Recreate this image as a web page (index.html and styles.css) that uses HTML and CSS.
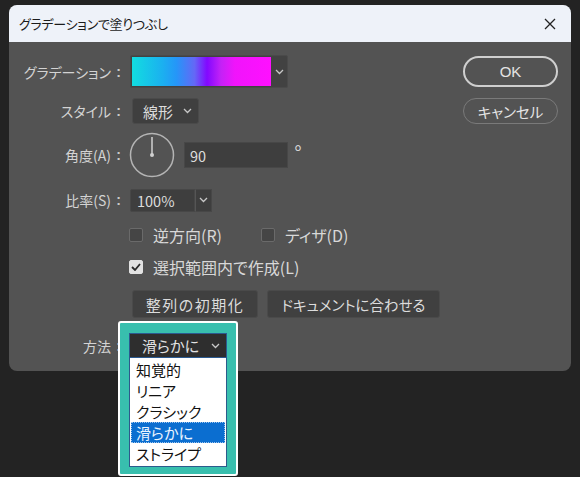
FILE: index.html
```html
<!DOCTYPE html>
<html lang="ja">
<head>
<meta charset="utf-8">
<link rel="stylesheet" href="styles.css">
</head>
<body>
<div class="dialog">
  <div class="titlebar">
    <span class="title">グラデーションで塗りつぶし</span>
    <svg class="close" width="12" height="12" viewBox="0 0 12 12"><path d="M1 1L11 11M11 1L1 11" stroke="#222" stroke-width="1.3" fill="none"/></svg>
  </div>
  <div class="body">
    <div class="form">
      <div class="row r1">
        <span class="label">グラデーション<span class="colon">:</span></span>
        <div class="gradbox">
          <div class="swatch"></div>
          <div class="gbtn"><svg width="9" height="6" viewBox="0 0 9 6"><path d="M1 1L4.5 4.5L8 1" stroke="#c8c8c8" stroke-width="1.3" fill="none"/></svg></div>
        </div>
      </div>
      <div class="row r2">
        <span class="label">スタイル<span class="colon">:</span></span>
        <div class="select style-sel"><span>線形</span><svg width="9" height="6" viewBox="0 0 9 6"><path d="M1 1L4.5 4.5L8 1" stroke="#c8c8c8" stroke-width="1.3" fill="none"/></svg></div>
      </div>
      <div class="row r3">
        <span class="label">角度(A)<span class="colon">:</span></span>
        <svg class="dial" width="46" height="46" viewBox="0 0 46 46"><circle cx="23" cy="23" r="21.5" stroke="#b4b4b4" stroke-width="1.5" fill="none"/><path d="M23 23V5" stroke="#d0d0d0" stroke-width="1.5"/><circle cx="23" cy="23" r="2" fill="#d0d0d0"/></svg>
        <div class="input angle">90</div>
        <span class="deg">°</span>
      </div>
      <div class="row r4">
        <span class="label">比率(S)<span class="colon">:</span></span>
        <div class="combo"><div class="input ratio">100%</div><div class="cbtn"><svg width="9" height="6" viewBox="0 0 9 6"><path d="M1 1L4.5 4.5L8 1" stroke="#c8c8c8" stroke-width="1.3" fill="none"/></svg></div></div>
      </div>
      <div class="row r5">
        <span class="label"></span>
        <span class="check"></span><span class="ctext">逆方向(R)</span>
        <span class="check second"></span><span class="ctext">ディザ(D)</span>
      </div>
      <div class="row r6">
        <span class="label"></span>
        <span class="check on"><svg width="10" height="8" viewBox="0 0 10 8"><path d="M1 4L4 7L9 1" stroke="#2a2a2a" stroke-width="1.8" fill="none"/></svg></span><span class="ctext">選択範囲内で作成(L)</span>
      </div>
      <div class="row r7">
        <span class="label"></span>
        <div class="btn reset">整列の初期化</div>
        <div class="btn fit">ドキュメントに合わせる</div>
      </div>
      <div class="row r8">
        <span class="label method">方法<span class="colon">:</span></span>
        <div class="popwrap">
          <div class="highlight">
            <div class="msel"><span>滑らかに</span><svg width="9" height="6" viewBox="0 0 9 6"><path d="M1 1L4.5 4.5L8 1" stroke="#c8c8c8" stroke-width="1.3" fill="none"/></svg></div>
            <ul class="list">
              <li>知覚的</li>
              <li>リニア</li>
              <li>クラシック</li>
              <li class="sel">滑らかに</li>
              <li>ストライプ</li>
            </ul>
          </div>
        </div>
      </div>
    </div>
    <div class="actions">
      <div class="pill ok">OK</div>
      <div class="pill cancel">キャンセル</div>
    </div>
  </div>
</div>
</body>
</html>
```
FILE: styles.css
```css
html, body {
  margin: 0;
  padding: 0;
}
body {
  background: #232323;
  width: 580px;
  height: 477px;
  overflow: hidden;
  font-family: "Noto Sans CJK JP", "Noto Sans", sans-serif;
  font-feature-settings: "palt";
}
.dialog {
  margin: 5px 0 0 9px;
  width: 562px;
  height: 366px;
  background: #535353;
  border-radius: 8px;
}
.titlebar {
  height: 37px;
  background: #eef2f9;
  border-radius: 8px 8px 0 0;
  display: flex;
  align-items: center;
  justify-content: space-between;
  padding: 0 15px 0 10px;
}
.title {
  font-size: 13px;
  color: #1b1b1b;
  letter-spacing: -0.3px;
}
.body {
  display: flex;
  padding: 13px 13px 0 0;
}
.form {
  flex: 1;
  display: flex;
  flex-direction: column;
}
.row {
  display: flex;
  align-items: center;
}
.label {
  width: 117px;
  margin-right: 4px;
  display: flex;
  justify-content: flex-end;
  align-items: center;
  font-size: 14px;
  color: #d3d3d3;
  white-space: nowrap;
  flex: none;
}
.colon {
  width: 15px;
  text-align: center;
  font-family: "Liberation Sans", sans-serif;
  font-size: 14px;
  font-weight: bold;
  color: #c9c9c9;
}
.r1 { height: 33px; }
.r2 { height: 26px; margin-top: 10px; }
.r3 { height: 46px; margin-top: 8px; }
.r4 { height: 22px; margin-top: 11px; }
.r5 { height: 18px; margin-top: 15px; }
.r6 { height: 18px; margin-top: 14px; }
.r7 { height: 28px; margin-top: 14px; }
.r8 { height: 25px; margin-top: 15px; }

.gradbox {
  display: flex;
  height: 33px;
  width: 158px;
  box-sizing: border-box;
  background: #424242;
  border: 1px solid #4a4a4a;
  border-radius: 2px;
}
.swatch {
  width: 139px;
  margin: 1px 0 1px 1px;
  background: linear-gradient(90deg, #12dde0 0%, #1bb0f0 22%, #2596f8 32%, #6468f6 45%, #8208ff 54%, #c422f6 64%, #f014fb 74%, #ff10ff 100%);
}
.gbtn {
  flex: 1;
  display: flex;
  align-items: center;
  justify-content: center;
}
.select {
  display: flex;
  align-items: center;
  justify-content: space-between;
  box-sizing: border-box;
  background: #3f3f3f;
  border: 1px solid #4a4a4a;
  border-radius: 3px;
  color: #dcdcdc;
  font-size: 15px;
}
.style-sel {
  width: 67px;
  height: 26px;
  margin-left: 2px;
  padding: 0 6px 0 10px;
}
.dial {
  margin-left: -1px;
}
.input {
  box-sizing: border-box;
  background: #3e3e3e;
  border: 1px solid #474747;
  color: #dcdcdc;
  font-size: 14.5px;
  display: flex;
  align-items: center;
  padding-left: 5px;
}
.angle {
  width: 104px;
  height: 26px;
  margin-left: 9px;
}
.deg {
  color: #d3d3d3;
  font-family: "Liberation Sans", sans-serif;
  font-size: 20px;
  margin-left: 6px;
  margin-top: -4px;
}
.combo {
  display: flex;
  height: 23px;
}
.ratio {
  width: 65px;
  height: 23px;
  padding-left: 6px;
  border-radius: 2px 0 0 2px;
}
.cbtn {
  width: 17px;
  height: 23px;
  box-sizing: border-box;
  background: #3e3e3e;
  border: 1px solid #474747;
  border-left-color: #555;
  display: flex;
  align-items: center;
  justify-content: center;
}
.check {
  width: 14px;
  height: 14px;
  box-sizing: border-box;
  background: #454545;
  border: 1px solid #6a6a6a;
  border-radius: 2px;
  margin-left: -1px;
  flex: none;
  display: flex;
  align-items: center;
  justify-content: center;
}
.check.second {
  margin-left: 39px;
}
.check.on {
  background: #e2e2e2;
  border-color: #e2e2e2;
}
.ctext {
  font-size: 16px;
  color: #d8d8d8;
  margin-left: 10px;
  white-space: nowrap;
}
.btn {
  height: 28px;
  box-sizing: border-box;
  background: #404040;
  border: 1px solid #4a4a4a;
  border-radius: 3px;
  color: #dcdcdc;
  font-size: 14.5px;
  display: flex;
  align-items: center;
  justify-content: center;
  white-space: nowrap;
}
.reset {
  width: 126px;
  margin-left: 2px;
  letter-spacing: 1.5px;
  font-size: 15px;
}
.fit {
  width: 173px;
  margin-left: 9px;
}
.popwrap {
  position: relative;
  width: 98px;
  height: 25px;
}
.highlight {
  position: absolute;
  left: -12px;
  top: -12px;
  width: 120px;
  height: 155px;
  box-sizing: border-box;
  border: 2px solid #ffffff;
  border-radius: 3px;
  background: #38bfae;
  padding: 10px 9px 7px 9px;
  display: flex;
  flex-direction: column;
}
.msel {
  height: 25px;
  box-sizing: border-box;
  background: #2e2e2e;
  border: 1px solid #2b5a90;
  display: flex;
  align-items: center;
  justify-content: space-between;
  padding: 0 6px 0 12px;
  color: #e2e2e2;
  font-size: 15px;
}
.list {
  list-style: none;
  margin: 0;
  padding: 1px 1px 2px 1px;
  flex: 1;
  background: #ffffff;
  border: 1px solid #2d5a8c;
  border-top: none;
}
.list li {
  height: 21px;
  line-height: 21px;
  font-size: 15px;
  color: #111;
  padding-left: 5px;
  box-sizing: border-box;
}
.list li.sel {
  background: #0b6ed0;
  color: #eaf4ff;
  outline: 1px dotted #9cc4ee;
  outline-offset: -1px;
}
.actions {
  width: 95px;
  display: flex;
  flex-direction: column;
}
.pill {
  box-sizing: border-box;
  border-radius: 16px;
  display: flex;
  align-items: center;
  justify-content: center;
  color: #e4e4e4;
  font-size: 14.5px;
}
.ok {
  height: 31px;
  margin-top: 1px;
  border: 2px solid #cfcfcf;
  font-family: "Liberation Sans", "Noto Sans", sans-serif;
  font-size: 15px;
}
.cancel {
  height: 26px;
  margin-top: 11px;
  border: 1px solid #7a7a7a;
}
```
